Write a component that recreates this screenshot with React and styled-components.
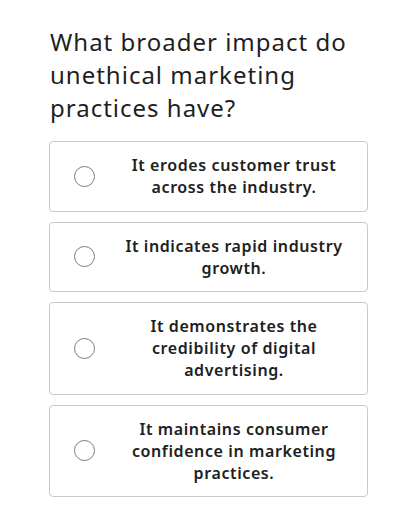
import React from 'react';
import styled, { createGlobalStyle } from "styled-components";


const GlobalStyle = createGlobalStyle`
    body {
        margin: 0;
        background: #ffffff;
        font-family: "Noto Sans", "Open Sans", sans-serif;
        color: #1f1f1f;
    }
`;

const Page = styled.div`
    padding: 25px 49px 0 49px;
    width: 319px;
`;

const Question = styled.h1`
    margin: 0 0 17px 1px;
    font-size: 24px;
    font-weight: 400;
    line-height: 33px;
    letter-spacing: 1px;
    color: #1f1f1f;
`;

const Options = styled.div`
    display: flex;
    flex-direction: column;
    gap: 10px;
`;

const OptionCard = styled.label`
    display: flex;
    align-items: center;
    padding: 12px 0 12.5px 24px;
    border: 1px solid #c9c9c9;
    border-radius: 4px;
    background: #fff;
    cursor: pointer;
`;

const Radio = styled.span`
    flex: 0 0 auto;
    width: 19px;
    height: 19px;
    border: 1.3px solid #7a7a7a;
    border-radius: 50%;
`;

const OptionText = styled.span`
    width: 226px;
    margin-left: 26px;
    text-align: center;
    font-size: 16px;
    font-weight: 600;
    line-height: 22px;
    letter-spacing: 0.6px;
    color: #202020;
`;


const answers = [
    "It erodes customer trust across the industry.",
    "It indicates rapid industry growth.",
    "It demonstrates the credibility of digital advertising.",
    "It maintains consumer confidence in marketing practices.",
];


const App = () => {
    return (
        <Page>
            <GlobalStyle />
            <Question>What broader impact do unethical marketing practices have?</Question>
            <Options>
                {answers.map(text => (
                    <OptionCard key={text}>
                        <Radio />
                        <OptionText>{text}</OptionText>
                    </OptionCard>
                ))}
            </Options>
        </Page>
    )
};

export default App
